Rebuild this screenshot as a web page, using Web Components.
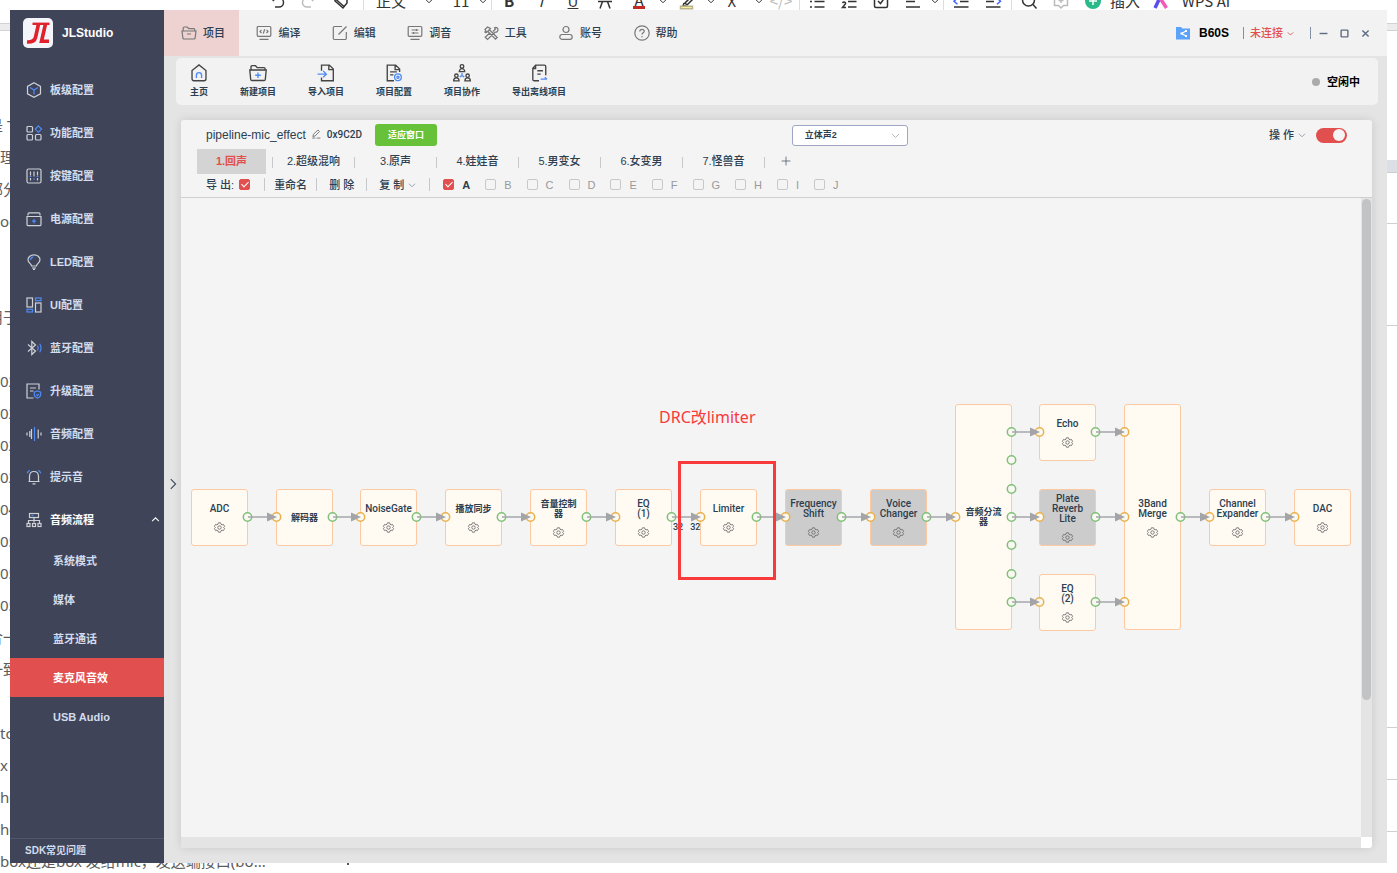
<!DOCTYPE html>
<html lang="zh-CN">
<head>
<meta charset="utf-8">
<meta name="viewport" content="width=device-width, initial-scale=1">
<title>JLStudio</title>
<style>
  html { height: 100%; }
  body {
    margin: 0;
    min-height: 100vh;
    background: #fff;
    color: #2c3e50;
    font-family: "Liberation Sans", "Noto Sans CJK SC", sans-serif;
    font-size: 11px;
  }
</style>
</head>
<body>
<studio-desktop></studio-desktop>

<script>
const define = (tag, css, html, setup) => {
  const template = document.createElement('template');
  template.innerHTML = `<style>*{box-sizing:border-box}button{font:inherit;color:inherit;background:none;border:0;padding:0;margin:0;cursor:pointer}a{color:inherit;text-decoration:none}${css}</style>${html}`;
  customElements.define(tag, class extends HTMLElement {
    constructor() {
      super();
      this.attachShadow({ mode: 'open' }).append(template.content.cloneNode(true));
    }
    connectedCallback() {
      if (setup && !this.ready) { this.ready = true; setup(this, this.shadowRoot); }
    }
  });
};

/* ---------- icons (16 x 16 grid, "b" = blue accent) ---------- */
const ICONS = {
  cube: '<path d="M8 .8 14.5 4.4v7.4L8 15.3 1.5 11.8V4.4z"/><path class="b" d="M4 5.6 8 8l4-2.4M8 8v4.6"/>',
  apps: '<rect x="1" y="1.5" width="5.5" height="5.5" rx="1"/><rect x="1" y="9.5" width="5.5" height="5.5" rx="1"/><rect x="9.5" y="9.5" width="5.5" height="5.5" rx="1"/><path class="b" d="m12.4.8 3.1 3.3-3.1 3.3-3.1-3.3z"/>',
  keys: '<rect x="1" y="1" width="14" height="14" rx="1.5"/><path d="M4.5 3.5v4M4.5 10v2.500M8 3.500v5M11.500 3.500v4M11.500 10v2.500"/><path class="b" d="M3.500 8.500h2M10.500 8.500h2M7 11h2"/>',
  power: '<path d="M2 4.500V3a1.200 1.200 0 0 1 1.200-1.200h9.600A1.200 1.200 0 0 1 14 3v1.500M1 5.500h14v8a1.200 1.200 0 0 1-1.200 1.200H2.200A1.200 1.200 0 0 1 1 13.500zM1 5.500h14"/><path class="b" d="M8 8v4.500M6 10.200h4"/>',
  bulb: '<path d="M5.500 12C5.500 9.500 2 9 2 5.800 2 3 4.700.8 8 .8s6 2.200 6 5c0 3.200-3.500 3.700-3.500 6.200zM6 14h4M7 15.400h2"/><path class="b" d="M4.600 6c0-1.500 1-2.600 2.600-2.800"/>',
  ui: '<rect x="1" y="1" width="5.500" height="9"/><rect x="9.500" y="6" width="5.500" height="9"/><rect class="b" x="1" y="12.300" width="5.500" height="2.700"/><rect class="b" x="9.500" y="1" width="5.500" height="2.700"/>',
  bt: '<path d="m2 4.500 7.500 6.500L5.800 14.500v-13L9.500 5 2 11.500"/><path class="b" d="M11.500 5.500c1 1.600 1 3.400 0 5M13.700 3.800c1.700 2.700 1.700 5.700 0 8.400"/>',
  upgrade: '<path d="M13 6.500V1H1v14h6.500M4 5h6M4 8h3.500"/><path class="b" d="m11.500 8 3.200 1.200v2.600c0 1.600-1.700 2.700-3.200 3.400-1.500-.700-3.200-1.800-3.200-3.400V9.200zM10.200 11.500l1.100 1.100 1.700-1.800"/>',
  wave: '<path d="M1 6.500v3M3.800 5v6M12.200 3.500v9M15 6.500v3M5.500 3v10"/><path class="b" d="M8.500 1v14"/>',
  bell: '<path d="M2.500 12.500h11M3.500 12.500V7.500C3.500 4.500 5.400 2.500 8 2.500s4.500 2 4.500 5v5M6.500 14.800h3"/><path class="b" d="M1.200 4.200C1.700 3 2.500 2 3.700 1.400M14.800 4.200C14.300 3 13.500 2 12.300 1.400"/>',
  flow: '<rect x="3.500" y="1.500" width="9" height="4"/><path d="M8 5.500v5M2.500 11V8.500h11V11"/><rect x="1" y="11.500" width="3" height="3"/><rect x="6.500" y="11.500" width="3" height="3"/><rect x="12" y="11.500" width="3" height="3"/><path class="b" d="M5.500 3.500h2"/>',
  folder: '<path d="M2.200 6V3.200C2.200 2.400 2.600 2 3.300 2h3l1.500 1.700h5c.700 0 1 .300 1 1V6M1 6h14l-.900 7.200c-.100.600-.400.800-1 .800H2.900c-.600 0-.900-.200-1-.800zM6 9h4"/>',
  code: '<rect x="1.200" y="1.500" width="13.600" height="9.800" rx="1"/><path d="M3.500 14.300h9M5.500 4.800 4 6.400l1.500 1.600M10.500 4.800 12 6.400 10.500 8M8.700 4.300 7.300 8.500"/>',
  edit: '<path d="M10 1.500H2.500A1.200 1.200 0 0 0 1.300 2.700v10.600a1.200 1.200 0 0 0 1.200 1.200h10.600a1.200 1.200 0 0 0 1.200-1.200V7M6.500 9.500 14.500 1.500"/>',
  tune: '<rect x="1.200" y="1.500" width="13.600" height="9.800" rx="1"/><path d="M3.500 14.300h9M4.500 5h7M4.500 8h7M9.500 4v2M6.500 7v2"/>',
  tools: '<path d="m5 6.500 7.500 7.700 1.700-1.700L6.700 5M2 4.500 4.500 2l3 1.500-3.700 3.800zM10 6.500 12.500 4 11.500 2.800c1.500-.8 3-.200 3.500 1.400.3 1.800-1.200 3.300-3 3L4.500 14.500 2.200 12.300 6.500 8.300M1.500 6.500 3 8"/>',
  user: '<circle cx="8" cy="4.500" r="3"/><rect x="1.800" y="9.500" width="12.400" height="4.800" rx="2.400"/>',
  help: '<circle cx="8" cy="8" r="7.200"/><path d="M5.800 6.400c0-1.300.9-2.100 2.200-2.100s2.200.8 2.200 2c0 1.500-2.200 1.600-2.200 3.200M8 11v1.200"/>',
  home: '<path d="M1.800 5.800 8 .8l6.200 5v7.400c0 1.100-.6 1.700-1.700 1.700h-9c-1.100 0-1.700-.6-1.700-1.700z"/><path class="b" d="M5.700 12.500V10c0-1.400.9-2.300 2.300-2.300s2.300.9 2.300 2.300v2.500"/>',
  newproject: '<path d="M1.800 5V2.500c0-.7.3-1 1-1h3L7.300 3.200h6c.7 0 1 .3 1 1V5M.7 5.300h14.600l-.8 8.400c-.1.700-.4 1-1.100 1H2.600c-.7 0-1-.3-1.100-1z"/><path class="b" d="M8 7.500v5M5.500 10h5"/>',
  import: '<path d="M4 6V1h7l3.500 3.500v10.400H4V12M10.500 1v4h4"/><path class="b" d="M.5 9h7.500M5.500 6.300 8.300 9l-2.800 2.700"/>',
  config: '<path d="M8 14.900H2V1h7.500L13 4.500V7M9 1v4h4M4.500 7h6M4.500 9.700h3"/><circle class="b" cx="11.500" cy="11.800" r="3"/><circle class="b" cx="11.500" cy="11.800" r="1"/>',
  team: '<circle cx="8" cy="2.200" r="1.600"/><path d="M5.600 6.800c0-3.600 4.800-3.600 4.800 0z"/><circle cx="3" cy="10.400" r="1.500"/><path d="M.6 15c0-3.600 4.800-3.600 4.800 0z"/><circle cx="13" cy="10.400" r="1.500"/><path d="M10.600 15c0-3.600 4.800-3.600 4.800 0z"/><path class="b" d="M8 8v2.500M6 11.500l2-1.200 2 1.200"/>',
  export: '<path d="M14 10V2.200c0-.8-.4-1.200-1.200-1.200H5L2.500 3.800v9.700c0 .8.500 1.400 1.300 1.400H8M5 1v3H2.500M6.500 6h5M6.500 9h3"/><path class="b" d="M9.500 13.500h5.500M13.200 11.800l1.800 1.700"/>',
  pencil: '<path d="m3 12 1-3.500L11 1.500 13.500 4 6.500 11.200zM2 14.500h5M9 14.500h6"/>',
  gear: '<path d="M6.400 1.200h3.200l.6 2 1.600.9 2-.5 1.600 2.800L14 8l1.400 1.600-1.600 2.800-2-.5-1.600.9-.6 2H6.400l-.6-2-1.600-.9-2 .5L.6 9.600 2 8 .6 6.400l1.600-2.800 2 .5 1.600-.9z"/><circle cx="8" cy="8" r="2.500"/>',
  down: '<path d="m2 5.500 6 6 6-6"/>', up: '<path d="m2 11 6-6 6 6"/>', right: '<path d="m5 1.500 6.500 6.500L5 14.500"/>',
  plus: '<path d="M8 1v14M1 8h14"/>',
  min: '<path d="M1 8h14"/>', max: '<rect x="2" y="2" width="12" height="12" rx="1"/>', close: '<path d="m2.500 2.500 11 11M13.500 2.500l-11 11"/>',
  share: '<path fill="#5aa2fa" stroke="none" d="M1 2h5l1.500 1.500H15V14.500H1z"/><path stroke="#fff" d="M11 6 6.500 8.500 11 11"/><path fill="#fff" stroke="none" d="M5.500 7.500h2.500v2H5.500zM10 5h2v2h-2zM10 10h2v2h-2z"/>',
  undo: '<path d="M2 5h8a4.500 4.500 0 0 1 0 9H6M5 2 2 5l3 3"/>',
  redo: '<path d="M14 5H6a4.500 4.500 0 0 0 0 9h4M11 2l3 3-3 3"/>',
  eraser: '<path d="M2 7 8 1l6 6v3l-4 5L2 8zM3 6.500l8 7"/>',
  strike: '<path d="M1 8.500h14M5.500 8.500 3 15.500M10.500 8.500l2.500 7"/>',
  marker: '<path d="m13 3-7 7 2 2 6-6M5 10l-1 3h3"/><path fill="#f5efa0" stroke="#b9b48a" d="M1.500 13.200h12v2.500h-12z"/>',
  list: '<path d="M5.500 3h10M5.500 8.500h10M5.500 14h10M1 8.500h2M1 14h2"/>',
  numlist: '<path d="M7 8.500h8.500M7 14h8.500M1.500 10c1-1.500 3.500-1 3 .7L1.500 14.500h3.500"/>',
  check: '<rect x="1.500" y="1.500" width="13" height="13" rx="1.500"/><path d="m5 8 2.500 2.500L11.500 5"/>',
  align: '<path d="M1 3h14M1 8.500h9M1 14h14"/>',
  outdent: '<path d="M7 8.500h8.500M1 14h14.500"/><path class="b" d="M4.500 5 1 8.200l3.500 3"/>',
  indent: '<path d="M1 8.500h8M1 14h14.500"/><path class="b" d="m12 5 3.500 3.200L12 11.200"/>',
  search: '<circle cx="7.500" cy="7" r="6"/><path d="m12 11.500 3.500 4"/>',
  comment: '<path d="M1.500 1.500h13v11h-4L8 15l-2.500-2.500h-4zM8 5v5M5.500 7.500h5"/>',
  add: '<circle cx="8" cy="8" r="8" fill="#2bb98a" stroke="none"/><path stroke="#fff" d="M8 4v8M4 8h8"/>',
  ai: '<path stroke="#5b4ef0" stroke-width="3.500" d="M2 15 7.500 3.500"/><path stroke="#ef5bb5" stroke-width="3.500" d="M7 5l6.500 10"/>'
};
define('ui-icon',
  `:host{display:inline-flex;flex:none;width:16px;height:16px}
   svg{display:block;width:100%;height:100%;fill:none;stroke:currentColor;stroke-width:var(--stroke,1.2);overflow:visible}
   .b{stroke:var(--accent,#4f8bf5)}`,
  `<svg viewBox="0 0 16 16" aria-hidden="true"></svg>`,
  (el, root) => { root.querySelector('svg').innerHTML = ICONS[el.getAttribute('name')] || ''; });

/* ---------- document window behind the application ---------- */
define('doc-tools',
  `:host{display:flex;align-items:center;height:26px;margin-top:-12px;padding-left:261px;color:#333;font:15px/26px "Noto Sans CJK SC",sans-serif;white-space:nowrap}
   span,i{flex:none;display:flex;justify-content:center;align-items:center;width:32px;height:26px;font-style:normal}
   .w{width:36px}.t{width:44px}.c{width:32px}.n{width:12px}.g{color:#bbb}
   .c ui-icon,.n ui-icon{width:8px;height:8px;--stroke:2}
   .s{width:4px}.s::before{content:"";width:1px;height:24px;background:#ddd}
   .gap{width:12px}
   .a{border-bottom:3px solid #c22b22;height:16px;width:12px;margin:0 12px}
   .ai{width:40px}.name{width:50px}
   ui-icon{--stroke:1.500;--accent:#3f63ff}`,
  `<span><ui-icon name="undo"></ui-icon></span><span class="g"><ui-icon name="redo"></ui-icon></span><span><ui-icon name="eraser"></ui-icon></span>
   <i class="s gap"></i><span class="t">正文</span><span class="c"><ui-icon name="down"></ui-icon></span><span class="c">11</span><span class="n"><ui-icon name="down"></ui-icon></span>
   <i class="s"></i><span><b>B</b></span><span><em>I</em></span><span><u>U</u></span><span><ui-icon name="strike"></ui-icon></span>
   <span class="a">A</span><span class="n"><ui-icon name="down"></ui-icon></span><span class="w"><ui-icon name="marker"></ui-icon></span><span class="n"><ui-icon name="down"></ui-icon></span>
   <span class="w">X²</span><span class="n"><ui-icon name="down"></ui-icon></span><span class="g">&lt;/&gt;</span><i class="s"></i>
   <span><ui-icon name="list"></ui-icon></span><span><ui-icon name="numlist"></ui-icon></span><span><ui-icon name="check"></ui-icon></span>
   <span><ui-icon name="align"></ui-icon></span><span class="n"><ui-icon name="down"></ui-icon></span><i class="s"></i>
   <span><ui-icon name="outdent"></ui-icon></span><span><ui-icon name="indent"></ui-icon></span><i class="s"></i>
   <span><ui-icon name="search"></ui-icon></span><span class="g"><ui-icon name="comment"></ui-icon></span><span><ui-icon name="add"></ui-icon></span>
   <span>插入</span><span class="ai"><ui-icon name="ai"></ui-icon></span><span class="name">WPS AI</span>`);

define('doc-page',
  `:host{display:block;position:absolute;inset:0;overflow:hidden;background:#fff}
   .strip{height:8px;margin-top:9px;background:#ececec;border:solid #d2d2d2;border-width:1px 0}
   .text{position:absolute;left:0;top:109px;margin:0;padding:0;list-style:none;color:#5c5c5c;font:15px/32px "Noto Sans","Noto Sans CJK SC",sans-serif;white-space:nowrap}
   li{height:32px}.cut{text-indent:-12px}
   .side{position:absolute;right:0;top:160px;width:10px;display:grid}
   .thumb{height:13px;background:#dcdfe6;border-bottom:1px solid #c9ccd2}
   .side i{border-bottom:1px solid #d0d0d0}
   .tick{position:absolute;left:347px;bottom:8px;width:2px;height:12px;background:#555}`,
  `<doc-tools></doc-tools><div class="strip"></div>
   <ul class="text"><li class="cut">是 T</li><li>理</li><li class="cut">部分</li><li>oc</li><li></li><li></li><li class="cut">用于</li><li></li>
   <li>02</li><li>02</li><li>02</li><li>02</li><li>04</li><li>05</li><li>05</li><li>05</li><li class="cut">合一</li><li class="cut">一致</li><li></li>
   <li>tc</li><li>x</li><li>h0</li><li>h0</li><li>box还是box 发给mic，发送端接口(bo...</li></ul>
   <div class="side"><div class="thumb"></div><i style="height:51px"></i><i style="height:102px"></i><i style="height:402px"></i><i style="height:52px"></i><i style="height:52px"></i></div>
   <div class="tick"></div>`);

/* ---------- sidebar ---------- */
define('nav-item',
  `:host{display:block;color:#d3dcec}
   a{display:flex;align-items:center;height:43px;padding:0 4px 0 16px;gap:8px;font-weight:700;line-height:16px}
   span{flex:1}
   .open{display:none;width:9px;height:9px;--stroke:1.800}
   :host([open]){color:#fff}:host([open]) .open{display:flex}
   .lead{color:#d0d2d8}`,
  `<a href="#"><ui-icon class="lead"></ui-icon><span><slot></slot></span><ui-icon class="open" name="up"></ui-icon></a>`,
  (el, root) => {
    const old = root.querySelector('.lead');
    old.insertAdjacentHTML('afterend', `<ui-icon class="lead" name="${el.getAttribute('icon')}"></ui-icon>`);
    old.remove();
  });
define('nav-sub',
  `:host{display:flex;flex:1;color:#d3dcec}
   :host([active]){background:#e1504f;color:#fff}
   a{flex:1;display:flex;align-items:center;padding-left:43px;font-weight:700;line-height:16px}`,
  `<a href="#"><slot></slot></a>`);
define('side-nav',
  `:host{display:flex;flex-direction:column;flex:none;width:154px;background:#3f4459}
   .brand{display:flex;align-items:center;gap:9px;height:58px;padding:0 13px 12px;color:#fff;font-weight:700;font-size:12px}
   .brand svg{width:30px;height:30px}
   .sub{display:flex;flex-direction:column;height:194px;margin-top:1px}
   .foot{margin-top:auto;height:25px;border-top:1px solid #50566c;padding-left:15px;font:700 10px/23px "Liberation Sans","Noto Sans CJK SC",sans-serif;color:#d3dcec}`,
  `<div class="brand"><svg viewBox="0 0 30 30" role="img" aria-label="JL"><rect width="30" height="30" rx="5" fill="#f4f5fa"/><g fill="none" stroke="#e0202b"><path stroke-width="3.600" d="M15.500 6 12.500 19.500Q11.400 24.300 4 24"/><path stroke-width="3.600" d="M22.500 6 18.500 23.300H26"/><path stroke-width="2.400" d="M9.500 5.800H26.500"/></g></svg>JLStudio</div>
   <nav>
    <nav-item icon="cube">板级配置</nav-item><nav-item icon="apps">功能配置</nav-item><nav-item icon="keys">按键配置</nav-item>
    <nav-item icon="power">电源配置</nav-item><nav-item icon="bulb">LED配置</nav-item><nav-item icon="ui">UI配置</nav-item>
    <nav-item icon="bt">蓝牙配置</nav-item><nav-item icon="upgrade">升级配置</nav-item><nav-item icon="wave">音频配置</nav-item>
    <nav-item icon="bell">提示音</nav-item><nav-item icon="flow" open>音频流程</nav-item>
    <div class="sub"><nav-sub>系统模式</nav-sub><nav-sub>媒体</nav-sub><nav-sub>蓝牙通话</nav-sub><nav-sub active>麦克风音效</nav-sub><nav-sub>USB Audio</nav-sub></div>
   </nav>
   <a class="foot" href="#">SDK常见问题</a>`);

/* ---------- menu bar ---------- */
define('menu-item',
  `:host{display:flex;flex:1}
   :host([active]){background:#eed1d1}
   button{flex:1;display:flex;align-items:center;gap:6px;padding-left:17px;font-weight:500;line-height:16px}
   ui-icon{color:#777}`,
  `<button><span></span><slot></slot></button>`,
  (el, root) => { root.querySelector('span').outerHTML = `<ui-icon name="${el.getAttribute('icon')}"></ui-icon>`; });
define('menu-bar',
  `:host{display:flex;justify-content:space-between;height:46px;background:#f2f2f2}
   nav{display:flex;width:528px}
   .right{display:flex;align-items:center;padding-right:17px}
   .board{display:flex;align-items:center;gap:8px;color:#000;font-weight:700;font-size:12px}
   .bar{width:1px;height:12px;background:#8190a5;margin:0 6px 0 14px}
   .link{display:flex;align-items:center;gap:4px;margin-right:2px;color:#e1504f;font-weight:500;line-height:16px}
   .link ui-icon{width:7px;height:7px;--stroke:2}
   .win{display:flex;gap:12px;padding-left:2px;color:#5d6b82}
   .win button{display:flex}
   .win ui-icon{width:9px;height:9px;--stroke:2.500}`,
  `<nav><menu-item icon="folder" active>项目</menu-item><menu-item icon="code">编译</menu-item><menu-item icon="edit">编辑</menu-item><menu-item icon="tune">调音</menu-item><menu-item icon="tools">工具</menu-item><menu-item icon="user">账号</menu-item><menu-item icon="help">帮助</menu-item></nav>
   <div class="right"><div class="board"><ui-icon name="share"></ui-icon>B60S</div><i class="bar"></i>
   <button class="link">未连接<ui-icon name="down"></ui-icon></button><i class="bar"></i>
   <div class="win"><button aria-label="最小化"><ui-icon name="min"></ui-icon></button><button aria-label="最大化"><ui-icon name="max"></ui-icon></button><button aria-label="关闭"><ui-icon name="close"></ui-icon></button></div></div>`);

/* ---------- project tool bar ---------- */
define('tool-item',
  `:host{display:block}
   button{display:flex;flex-direction:column;align-items:center;gap:4px;padding-bottom:2px;font-size:9px;font-weight:700;line-height:12px}
   ui-icon{width:18px;height:18px;color:#444}`,
  `<button><span></span><slot></slot></button>`,
  (el, root) => { root.querySelector('span').outerHTML = `<ui-icon name="${el.getAttribute('icon')}"></ui-icon>`; });
define('tool-bar',
  `:host{display:flex;align-items:center;justify-content:space-between;height:47px;margin-left:12px;padding:0 18px 0 14px;background:#f2f2f2;border-radius:5px}
   div{display:flex;gap:32px}
   p{display:flex;align-items:center;gap:7px;margin:0;color:#000;font-weight:700;line-height:16px}
   p::before{content:"";width:8px;height:8px;border-radius:4px;background:#aaa}`,
  `<div><tool-item icon="home">主页</tool-item><tool-item icon="newproject">新建项目</tool-item><tool-item icon="import">导入项目</tool-item><tool-item icon="config">项目配置</tool-item><tool-item icon="team">项目协作</tool-item><tool-item icon="export">导出离线项目</tool-item></div>
   <p>空闲中</p>`);

/* ---------- form controls ---------- */
define('check-box',
  `:host{display:block}
   label{display:flex;align-items:center;gap:8px;line-height:16px;color:#999}
   :host([checked]) label{color:#2c3e50;font-weight:700}
   :host([before]) label{flex-direction:row-reverse;gap:5px;font-weight:500}
   input{appearance:none;display:flex;justify-content:center;width:11px;height:11px;margin:0;border:1px solid #c8c8c8;border-radius:2px;background:#f4f4f4}
   input:checked{background:#e1504f;border-color:#e1504f}
   input:checked::after{content:"";width:3px;height:6px;border:solid #fff;border-width:0 1px 1px 0;transform:rotate(45deg)}`,
  `<label><input type="checkbox"><slot></slot></label>`,
  (el, root) => { root.querySelector('input').checked = el.hasAttribute('checked'); });
define('pick-list',
  `:host{display:grid;width:116px;height:21px}
   select,ui-icon{grid-area:1/1}
   select{appearance:none;width:100%;border:1px solid #9fa6c4;border-radius:3px;background:#fff;padding:0 12px;color:inherit;font:700 9px/16px "Liberation Sans","Noto Sans CJK SC",sans-serif}
   ui-icon{justify-self:end;align-self:center;width:9px;height:9px;margin-right:8px;color:#a4a9b4;--stroke:1.500;pointer-events:none}`,
  `<select aria-label="声道"><option>立体声2</option></select><ui-icon name="down"></ui-icon>`);
define('toggle-switch',
  `:host{display:flex}
   input{appearance:none;display:flex;justify-content:flex-end;align-items:center;width:31px;height:15px;margin:0;padding:0 2px;border-radius:8px;background:#e1504f}
   input::after{content:"";width:12px;height:12px;border-radius:6px;background:#f4f4f4}`,
  `<input type="checkbox" role="switch" aria-label="操作" checked>`);

/* ---------- pipeline header ---------- */
define('pipeline-head',
  `:host{display:block;height:78px;padding:3px 0 0 16px;border-bottom:1px solid #cfcfcf;line-height:16px}
   .top,.tabs,.acts,.main,.ops{display:flex;align-items:center}
   .top{height:24px;padding:0 25px 0 9px}
   .main{flex:4;font-size:12px}
   .main small{font:500 10px/16px Roboto,sans-serif;margin:0 13px 0 6px}
   .main ui-icon{width:10px;height:10px;margin-left:5px;color:#555}
   .fit{width:62px;height:22px;padding-bottom:1px;border-radius:3px;background:#67c23a;color:#fff;font-size:9px;font-weight:700}
   .ops{flex:3;justify-content:flex-end;gap:10px;font-weight:500}
   .drop{display:flex;align-items:center;gap:4px;font-weight:500}
   .drop ui-icon{width:8px;height:8px;color:#8a94a0;--stroke:1.700}
   .tabs{height:25px;margin-top:2px}
   .tabs button{width:69px;height:25px;padding-bottom:2px;font-weight:500;white-space:nowrap}
   .tabs button.on{background:#d4d4d4;color:#e1504f;font-weight:700}
   .tabs .add{display:flex;align-items:center;width:22px;padding-left:10px}
   .add ui-icon{width:10px;height:10px;color:#44546a}
   i{width:1px;height:11px;background:#c6c8cc;margin:2px 6px 0}
   .acts{height:23px;padding:0 0 2px 9px;font-weight:500}
   .acts i{height:13px;margin:0}
   .acts>button{padding:0 9px}
   .acts>button.mid{padding:0 12px}
   .acts>button.drop{padding:0 13px 0 12px}
   .acts check-box[before]{margin-right:14px}
   .chans{display:flex;gap:15px;margin-left:13px}`,
  `<div class="top"><div class="main">pipeline-mic_effect<button aria-label="重命名流程"><ui-icon name="pencil"></ui-icon></button><small>0x9C2D</small><button class="fit">适应窗口</button></div>
   <pick-list></pick-list>
   <div class="ops"><button class="drop">操 作<ui-icon name="down"></ui-icon></button><toggle-switch></toggle-switch></div></div>
   <div class="tabs"><button class="on">1.回声</button><i></i><button>2.超级混响</button><i></i><button>3.原声</button><i></i><button>4.娃娃音</button><i></i><button>5.男变女</button><i></i><button>6.女变男</button><i></i><button>7.怪兽音</button><i></i><button class="add" aria-label="添加"><ui-icon name="plus"></ui-icon></button></div>
   <div class="acts"><check-box before checked>导 出:</check-box><i></i><button>重命名</button><i></i><button class="mid">删 除</button><i></i><button class="drop">复 制<ui-icon name="down"></ui-icon></button><i></i>
   <div class="chans"><check-box checked>A</check-box><check-box>B</check-box><check-box>C</check-box><check-box>D</check-box><check-box>E</check-box><check-box>F</check-box><check-box>G</check-box><check-box>H</check-box><check-box>I</check-box><check-box>J</check-box></div></div>`);

/* ---------- flow diagram ---------- */
define('flow-node',
  `:host{position:absolute;display:flex;flex-direction:column;align-items:center;justify-content:center;gap:8px;box-sizing:border-box;width:57px;height:57px;padding-top:2px;border:1px solid #fcc9a2;border-radius:3px;background:#fffaf2;font:500 10px/10px Roboto,"Noto Sans CJK SC",sans-serif;text-align:center;white-space:nowrap}
   :host([bypass]){background:#ccc}
   :host([tall]){height:226px}
   :host([cjk]){font-weight:700;font-size:9px}
   ui-icon{width:11px;height:11px;color:#666}
   :host([plain]){padding-top:0}
   :host([plain]) ui-icon{display:none}`,
  `<div><slot></slot></div><ui-icon name="gear"></ui-icon>`);

const COLS = [10, 95, 179, 264, 349, 434, 519, 604, 689, 774, 858, 943, 1028, 1113];
const NODES = [
  [0, 291, 'ADC'], [1, 291, '解码器', 'cjk plain'], [2, 291, 'NoiseGate'], [3, 291, '播放同步', 'cjk'],
  [4, 291, '音量控制<br>器', 'cjk'], [5, 291, 'EQ<br>(1)'], [6, 291, 'Limiter'], [7, 291, 'Frequency<br>Shift', 'bypass'],
  [8, 291, 'Voice<br>Changer', 'bypass'], [9, 206, '音频分流<br>器', 'cjk tall plain'], [10, 206, 'Echo'],
  [10, 291, 'Plate<br>Reverb<br>Lite', 'bypass'], [10, 376, 'EQ<br>(2)'], [11, 206, '3Band<br>Merge', 'tall'],
  [12, 291, 'Channel<br>Expander'], [13, 291, 'DAC']
];
const MID = 319, TOP = 234, LOW = 404;
const LINKS = [...Array(13).keys()].map(c => [c, MID]).concat([[9, TOP], [9, LOW], [10, TOP], [10, LOW]]);
const SPARE = [262, 291, 347, 376];

define('flow-canvas',
  `:host{position:relative;display:block;overflow:hidden;background:#f4f4f4}
   svg{position:absolute;inset:0;width:100%;height:100%}
   .in,.out{fill:#faf8f3;stroke-width:1.500}
   .in{stroke:#eab14b}.out{stroke:#80c078}
   .edge{stroke:#a6a7ab;stroke-width:1.500}.tip{fill:#a3a4a8}
   .bits{position:absolute;display:flex;gap:7px;left:492px;top:323px;font:500 9px/12px Roboto,sans-serif}
   .frame{position:absolute;left:497px;top:263px;width:98px;height:119px;border:3px solid #f93a3a}
   .note{position:absolute;left:478px;top:207px;margin:0;font:16px/24px "Noto Sans","Noto Sans CJK SC",sans-serif;color:#f93a3a;white-space:nowrap}`,
  `<div class="nodes"></div><svg aria-hidden="true"></svg><div class="bits"><span>32</span><span>32</span></div><div class="frame"></div><p class="note">DRC改limiter</p>`,
  (el, root) => {
    root.querySelector('.nodes').innerHTML = NODES.map(([c, y, text, flags = '']) =>
      `<flow-node ${flags} style="left:${COLS[c]}px;top:${y}px">${text}</flow-node>`).join('');
    const ring = (kind, x, y) => `<circle class="${kind}" cx="${x}" cy="${y}" r="4.200"/>`;
    const rings = LINKS.map(([c, y]) => ring('out', COLS[c] + 56.5, y) + ring('in', COLS[c + 1] + .5, y)).join('')
      + SPARE.map(y => ring('out', COLS[9] + 56.5, y)).join('');
    const edges = LINKS.map(([c, y]) => {
      const a = COLS[c] + 57, b = COLS[c + 1];
      return `<path class="edge" d="M${a} ${y}H${b - 6}"/><path class="tip" d="M${b - 9} ${y - 4.5}L${b + 1} ${y}L${b - 9} ${y + 4.5}z"/>`;
    }).join('');
    root.querySelector('svg').innerHTML = rings + edges;
  });

define('pipeline-panel',
  `:host{display:flex;flex-direction:column;flex:1;min-width:0;background:#f4f4f4;border-radius:3px;box-shadow:0 0 10px rgba(0,0,0,.12);overflow:hidden}
   .view{flex:1;display:grid;grid-template:1fr 11px / 1fr 11px;background:#e4e4e4}
   .bar{display:flex;flex-direction:column;padding:1px 1px 0}
   .bar::before{content:"";flex:11;border-radius:5px;background:#c2c3c5}
   .bar::after{content:"";flex:3}
   .corner{grid-column:2;background:#fff}`,
  `<pipeline-head></pipeline-head><div class="view"><flow-canvas></flow-canvas><div class="bar"></div><div class="corner"></div></div>`);

/* ---------- application window ---------- */
define('app-window',
  `:host{position:relative;display:flex;min-height:calc(100vh - 20px);background:#e4e4e4}
   main{flex:1;min-width:0;display:flex;flex-direction:column}
   tool-bar{margin-top:2px;margin-right:9px}
   .work{flex:1;display:flex;padding:15px 15px 15px 0}
   .fold{flex:none;display:flex;align-items:center;justify-content:center;width:17px;color:#3d4a60}
   .fold ui-icon{width:12px;height:12px;--stroke:1.500}`,
  `<side-nav></side-nav><main><menu-bar></menu-bar><tool-bar></tool-bar><div class="work"><button class="fold" aria-label="展开"><ui-icon name="right"></ui-icon></button><pipeline-panel></pipeline-panel></div></main>`);
define('studio-desktop',
  `:host{position:relative;display:block;min-height:100vh;padding:10px;box-sizing:border-box;overflow:hidden}`,
  `<doc-page></doc-page><app-window></app-window>`);
</script>
</body>
</html>
